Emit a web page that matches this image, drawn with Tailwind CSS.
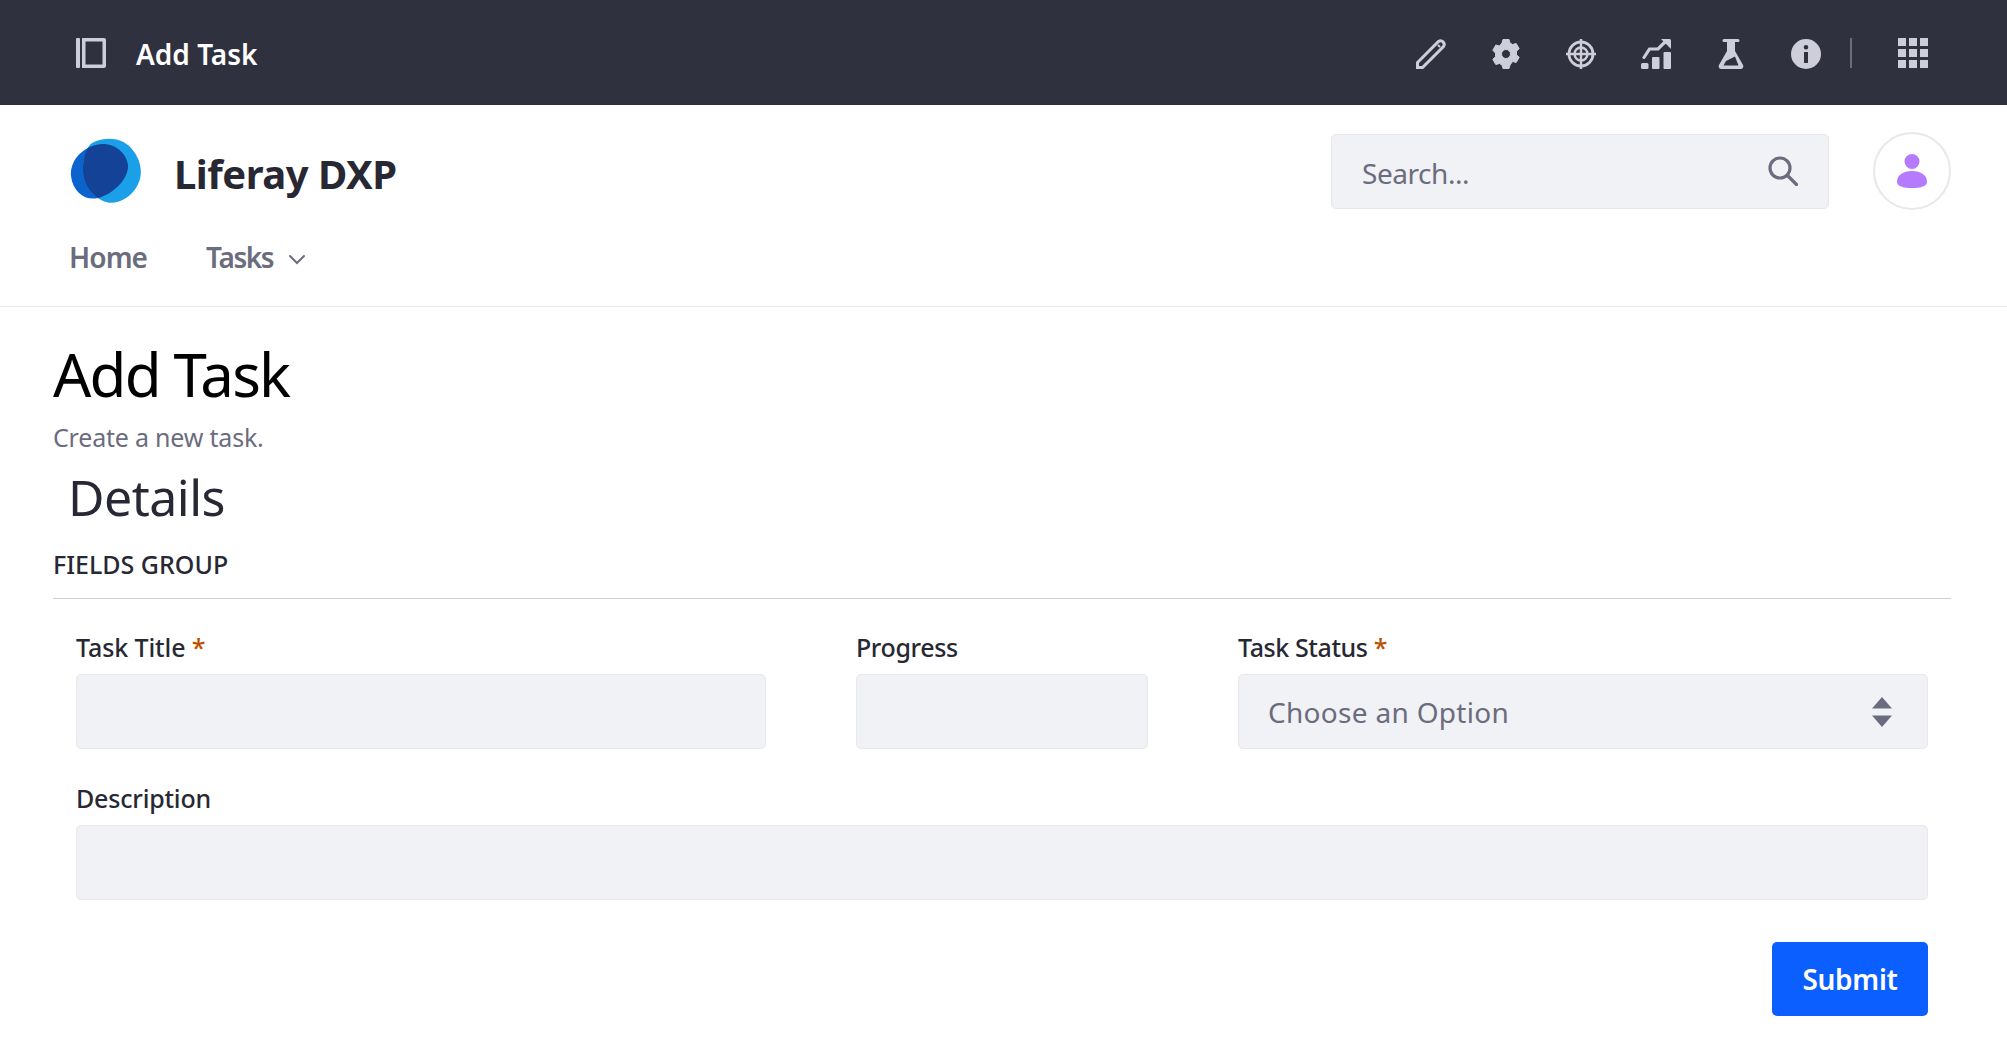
<!DOCTYPE html>
<html lang="en">
<head>
    <meta charset="UTF-8">
    <meta name="viewport" content="width=device-width, initial-scale=1.0">
    <title>Add Task - Liferay DXP</title>
    <script src="https://cdn.jsdelivr.net/npm/@tailwindcss/browser@4"></script>
</head>
<body class="bg-white min-h-screen font-['Noto_Sans',sans-serif] text-[#272833]">
    <!-- Control Menu -->
    <div class="h-[105px] bg-[#30313f] flex items-center justify-between pl-[76px] pr-[79px] text-[#cdced9]">
        <div class="flex items-center gap-[30px]">
            <svg class="w-[30px] h-[30px]" viewBox="0 0 30 30" fill="currentColor">
                <rect x="0" y="0" width="4" height="30" rx="1"/>
                <path fill-rule="evenodd" d="M6 0h22a2 2 0 0 1 2 2v26a2 2 0 0 1-2 2H6zM9.500 3.500v23h17v-23z"/>
            </svg>
            <span class="text-[28px] font-semibold text-white pt-[2px]">Add Task</span>
        </div>
        <div class="flex items-center gap-[45px] pt-[2px]">
            <!-- pencil -->
            <svg class="w-[30px] h-[30px]" viewBox="0 0 30 30" fill="none" stroke="currentColor" stroke-width="3">
                <path d="M1.500 28.500v-5L22.500 2.500a3.600 3.600 0 0 1 5 5L6.500 28.500z"/>
                <path d="M22 6l2 2" stroke-width="2"/>
            </svg>
            <!-- gear -->
            <svg class="w-[30px] h-[30px]" viewBox="0 0 30 30" fill="currentColor">
                <path fill-rule="evenodd" stroke="currentColor" stroke-width="1" stroke-linejoin="round" d="M12 .5h6l1 3.500 2.600 1.500 3.600-1 3 5.200-2.700 2.500v3.600l2.700 2.500-3 5.200-3.600-1L19 26l-1 3.500h-6L11 26l-2.600-1.500-3.600 1-3-5.200 2.700-2.500v-3.600L1.800 11.200l3-5.200 3.600 1L11 4zM15 10.500a4.500 4.500 0 1 0 0 9 4.500 4.500 0 0 0 0-9z"/>
            </svg>
            <!-- target -->
            <svg class="w-[30px] h-[30px]" viewBox="0 0 30 30" fill="none" stroke="currentColor" stroke-width="2.800">
                <circle cx="15" cy="15" r="12"/>
                <circle cx="15" cy="15" r="6.500" stroke-width="2.400"/>
                <path d="M15 0v30M0 15h30" stroke-width="2.400"/>
            </svg>
            <!-- analytics -->
            <svg class="w-[30px] h-[30px]" viewBox="0 0 30 30" fill="currentColor">
                <rect x="0" y="24" width="7.500" height="6" rx="1.500"/>
                <rect x="11" y="18" width="7.500" height="12" rx="1"/>
                <rect x="22.500" y="13" width="7.500" height="17" rx="1"/>
                <path d="M3 18.500 8.500 10H17L26 1" fill="none" stroke="currentColor" stroke-width="3.200" stroke-linecap="round"/>
                <path d="M20 0h8.500a1.500 1.500 0 0 1 1.500 1.500V10z"/>
            </svg>
            <!-- flask -->
            <svg class="w-[30px] h-[30px]" viewBox="0 0 30 30" fill="currentColor">
                <path fill-rule="evenodd" d="M8 0h14a1.500 1.500 0 0 1 0 3h-3v9l8 14a2.700 2.700 0 0 1-2.500 4H5.500a2.700 2.700 0 0 1-2.500-4l8-14V3H8a1.500 1.500 0 0 1 0-3zM7.500 26.500h15l-3.500-9-9 4.500z"/>
            </svg>
            <!-- info -->
            <svg class="w-[30px] h-[30px]" viewBox="0 0 30 30" fill="currentColor">
                <path fill-rule="evenodd" d="M15 0a15 15 0 1 1 0 30 15 15 0 0 1 0-30zM15 6a2.300 2.300 0 1 0 0 4.600A2.300 2.300 0 0 0 15 6zM13 13v11h4V13z"/>
            </svg>
            <div class="flex items-center gap-[46px] -ml-[16px] -mt-[2px]">
                <div class="w-[2px] h-[30px] bg-[#6b6c7e]"></div>
                <svg class="w-[30px] h-[30px]" viewBox="0 0 30 30" fill="currentColor">
                    <rect x="0" y="0" width="8" height="8"/><rect x="11" y="0" width="8" height="8"/><rect x="22" y="0" width="8" height="8"/>
                    <rect x="0" y="11" width="8" height="8"/><rect x="11" y="11" width="8" height="8"/><rect x="22" y="11" width="8" height="8"/>
                    <rect x="0" y="22" width="8" height="8"/><rect x="11" y="22" width="8" height="8"/><rect x="22" y="22" width="8" height="8"/>
                </svg>
            </div>
        </div>
    </div>

    <!-- Site Header -->
    <header class="h-[202px] border-b border-[#e7e7ed] pl-[70px] pr-[56px]">
        <div class="flex items-center justify-between pt-[27px]">
            <div class="flex items-center gap-[33px]">
                <svg class="w-[71px] h-[66px]" viewBox="0 0 71 66">
                    <defs>
                        <clipPath id="leftBlob"><path d="M26 7C40 3 56 12 58 27 59 40 44 56 28 60 16 63 3 55 1 38 0 24 10 11 26 7Z"/></clipPath>
                    </defs>
                    <path fill="#0b63ce" d="M26 7C40 3 56 12 58 27 59 40 44 56 28 60 16 63 3 55 1 38 0 24 10 11 26 7Z"/>
                    <path fill="#1b9fe8" d="M22 5C36-2 52 0 61 10 72 22 74 38 66 50 58 62 44 68 33 63 20 57 12 44 13 29 14 18 16 9 22 5Z"/>
                    <path clip-path="url(#leftBlob)" fill="#134296" d="M22 5C36-2 52 0 61 10 72 22 74 38 66 50 58 62 44 68 33 63 20 57 12 44 13 29 14 18 16 9 22 5Z"/>
                </svg>
                <span class="text-[40px] font-bold leading-none pt-[6px] tracking-[-0.5px]">Liferay DXP</span>
            </div>
            <div class="flex items-center gap-[44px]">
                <div class="w-[498px] h-[75px] bg-[#f1f2f5] border border-[#e7e7ed] rounded-[5px] flex items-center justify-between pl-[30px] pr-[30px]">
                    <span class="text-[28px] text-[#6b6c7e] tracking-[-0.45px] pt-[3px]">Search...</span>
                    <svg class="w-[30px] h-[30px]" viewBox="0 0 30 30" fill="none" stroke="#6b6c7e" stroke-width="3.200" stroke-linecap="round">
                        <circle cx="12" cy="12" r="10"/>
                        <path d="M19.500 19.500 28.500 28.500"/>
                    </svg>
                </div>
                <div class="w-[78px] h-[78px] shrink-0 rounded-full border-2 border-[#e7e7ed] flex items-center justify-center">
                    <svg class="w-[30px] h-[34px]" viewBox="0 0 30 34" fill="#b57bff">
                        <circle cx="15" cy="7.500" r="7.500"/>
                        <path d="M15 17c9 0 15 4 15 11 0 4-6 6-15 6S0 32 0 28c0-7 6-11 15-11z"/>
                    </svg>
                </div>
            </div>
        </div>
        <nav class="flex items-center gap-[59px] mt-[26px] -ml-px text-[28px] font-semibold text-[#6b6c7e] tracking-[-0.9px]">
            <a>Home</a>
            <a class="flex items-center gap-[15px] tracking-[-1.4px]">Tasks
                <svg class="w-[18px] h-[18px] mt-[4px]" viewBox="0 0 18 18" fill="none" stroke="#6b6c7e" stroke-width="2" stroke-linecap="round"><path d="M2 6l7 7 7-7"/></svg>
            </a>
        </nav>
    </header>

    <!-- Page content -->
    <main class="pl-[53px] pr-[56px]">
        <h1 class="text-[60px] leading-[80px] mt-[27px] text-black tracking-[-1.8px]">Add Task</h1>
        <p class="text-[25px] leading-[34px] mt-[6px] text-[#6b6c7e] tracking-[-0.2px]">Create a new task.</p>
        <h2 class="text-[50px] leading-[60px] mt-[13px] pl-[15px] tracking-[-0.5px]">Details</h2>
        <div class="text-[25px] leading-[34px] mt-[20px] font-medium">FIELDS GROUP</div>
        <div class="border-b border-[#cdced9] mt-[17px]"></div>

        <form class="px-[23px] mt-[30px]">
            <div class="grid grid-cols-[690px_292px_690px] gap-x-[90px]">
                <div>
                    <label class="block text-[25px] leading-[36px] font-medium tracking-[-0.1px]">Task Title <span class="text-[#b95000]">*</span></label>
                    <input class="block mt-[9px] w-full h-[75px] bg-[#f1f2f5] border border-[#e7e7ed] rounded-[5px]">
                </div>
                <div>
                    <label class="block text-[25px] leading-[36px] font-medium tracking-[-0.4px]">Progress</label>
                    <input class="block mt-[9px] w-full h-[75px] bg-[#f1f2f5] border border-[#e7e7ed] rounded-[5px]">
                </div>
                <div>
                    <label class="block text-[25px] leading-[36px] font-medium tracking-[-0.4px]">Task Status <span class="text-[#b95000]">*</span></label>
                    <div class="mt-[9px] h-[75px] bg-[#f1f2f5] border border-[#e7e7ed] rounded-[5px] flex items-center justify-between pl-[29px] pr-[35px]">
                        <span class="text-[28px] text-[#6b6c7e] tracking-[0.3px]">Choose an Option</span>
                        <svg class="w-[20px] h-[30px]" viewBox="0 0 20 30" fill="#6b6c7e">
                            <path d="M10 0l10 11.500H0zM0 18.500h20L10 30z"/>
                        </svg>
                    </div>
                </div>
            </div>
            <div class="mt-[31px]">
                <label class="block text-[25px] leading-[36px] font-medium tracking-[-0.2px]">Description</label>
                <input class="block mt-[9px] w-full h-[75px] bg-[#f1f2f5] border border-[#e7e7ed] rounded-[5px]">
            </div>
            <div class="flex justify-end mt-[42px]">
                <button type="button" class="w-[156px] h-[74px] bg-[#0b5fff] text-white text-[28px] font-semibold rounded-[5px] tracking-[-0.3px]">Submit</button>
            </div>
        </form>
    </main>
</body>
</html>
